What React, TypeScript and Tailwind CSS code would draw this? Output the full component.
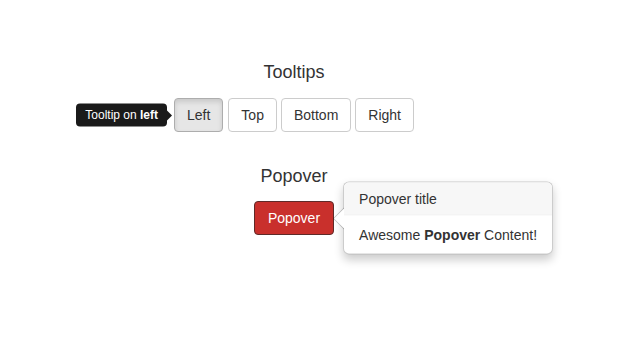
export default function App() {
  return (
    <div className="h-[364px] w-[621px] bg-white font-['Liberation_Sans',Arial,sans-serif] text-[#333]">
      <div className="flex w-[588px] flex-col items-center pt-[62px]">
        <h4 className="text-[18px] leading-[20px]">Tooltips</h4>

        <div className="mt-[16px] flex gap-[4px] text-[14px] leading-[20px]">
          <div className="relative mr-[1px]">
            <div className="absolute right-full top-1/2 mr-[2px] flex -translate-y-1/2 items-center">
              <div className="whitespace-nowrap rounded-[4px] bg-[#1a1a1a] px-[9px] py-[3px] text-[12px] leading-[17px] text-white">
                Tooltip on <b>left</b>
              </div>
              <span className="h-0 w-0 border-y-[5px] border-l-[5px] border-y-transparent border-l-[#1a1a1a]" />
            </div>
            <button className="rounded-[4px] border border-[#adadad] bg-[#e6e6e6] px-[12px] py-[6px] shadow-[inset_0_3px_5px_rgba(0,0,0,0.125)]">
              Left
            </button>
          </div>
          <button className="rounded-[4px] border border-[#ccc] bg-white px-[12px] py-[6px]">Top</button>
          <button className="rounded-[4px] border border-[#ccc] bg-white px-[12px] py-[6px]">Bottom</button>
          <button className="rounded-[4px] border border-[#ccc] bg-white px-[12px] py-[6px]">Right</button>
        </div>

        <h4 className="mt-[34px] text-[18px] leading-[20px]">Popover</h4>

        <div className="relative mt-[15px] text-[14px] leading-[20px]">
          <button className="rounded-[4px] border border-[#5f2a28] bg-[#c9302c] px-[13px] py-[6px] text-white">
            Popover
          </button>
          <div className="absolute left-full top-1/2 ml-[9px] w-[210px] -translate-y-1/2 rounded-[6px] border border-black/20 bg-white text-left shadow-[0_5px_10px_rgba(0,0,0,0.2)]">
            <span className="absolute -left-[11px] top-1/2 h-0 w-0 -translate-y-1/2 border-y-[11px] border-r-[11px] border-y-transparent border-r-black/25" />
            <span className="absolute -left-[10px] top-1/2 h-0 w-0 -translate-y-1/2 border-y-[10px] border-r-[10px] border-y-transparent border-r-white" />
            <div className="rounded-t-[5px] border-b border-[#ebebeb] bg-[#f7f7f7] px-[15px] py-[6px] leading-[20px]">
              Popover title
            </div>
            <div className="px-[15px] py-[9px]">
              Awesome <b>Popover</b> Content!
            </div>
          </div>
        </div>
      </div>
    </div>
  );
}
